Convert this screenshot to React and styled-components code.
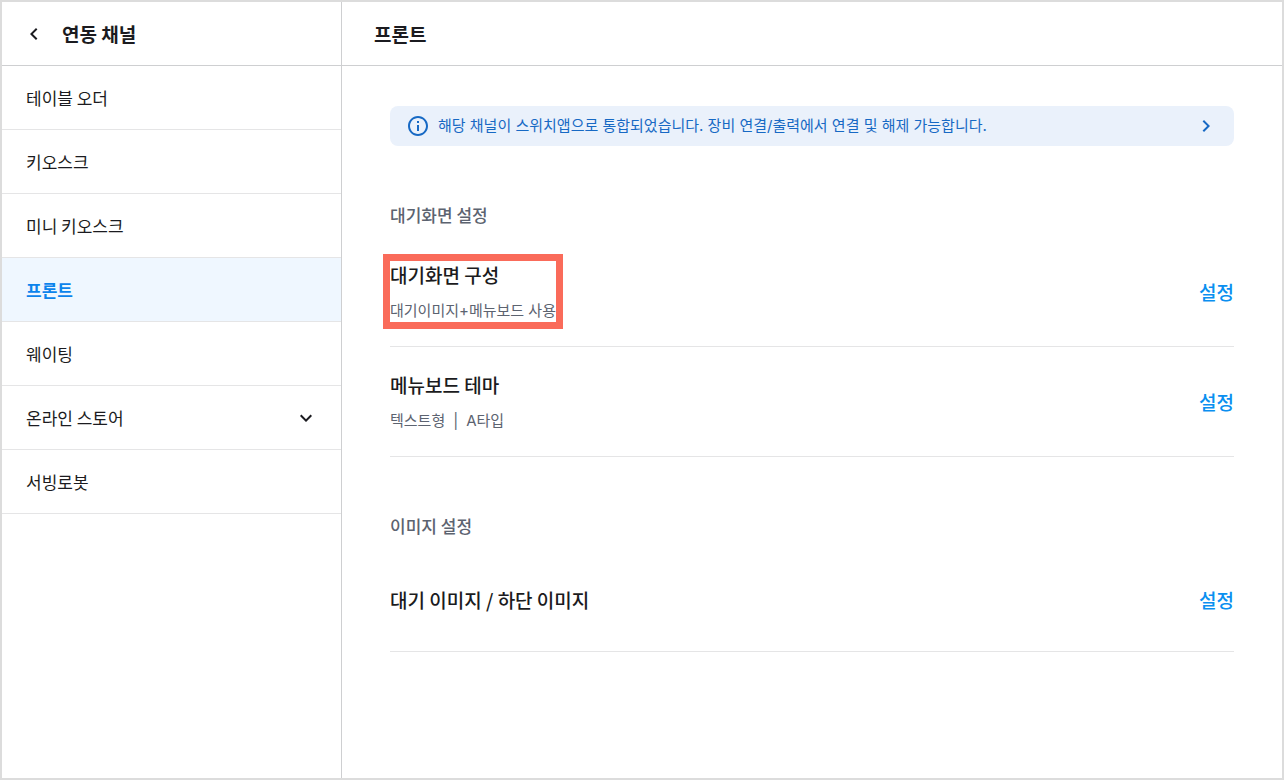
import React from 'react'
import styled, { createGlobalStyle, css, ThemeProvider } from 'styled-components'

const theme = {
  colors: {
    ink: '#1b1b20',
    slate: '#5c6370',
    primary: '#0c84ec',
    action: '#0a8ff0',
    notice: '#1769c4',
    noticeBg: '#eaf1fb',
    activeBg: '#eff7ff',
    frame: '#dcdcdc',
    border: '#cecfd1',
    divider: '#e5e5e6',
    coral: '#fa6b5a'
  },
  fonts: {
    body: "'Noto Sans CJK KR', 'Noto Sans', sans-serif",
    small: "Inter, 'Noto Sans CJK KR', sans-serif"
  }
}

const channels = [
  { text: '테이블 오더' },
  { text: '키오스크' },
  { text: '미니 키오스크' },
  { text: '프론트', active: true },
  { text: '웨이팅' },
  { text: '온라인 스토어', expandable: true },
  { text: '서빙로봇' }
]

const sections = [
  {
    title: '대기화면 설정',
    items: [
      { title: '대기화면 구성', detail: ['대기이미지+메뉴보드 사용'], highlighted: true },
      { title: '메뉴보드 테마', detail: ['텍스트형', 'A타입'] }
    ]
  },
  {
    title: '이미지 설정',
    items: [{ title: '대기 이미지 / 하단 이미지' }]
  }
]

const GlobalStyle = createGlobalStyle`
  *, *::before, *::after {
    box-sizing: border-box;
  }

  body {
    background-color: #ffffff;
    color: ${({ theme }) => theme.colors.ink};
    font-family: ${({ theme }) => theme.fonts.body};
    margin: 0;
  }
`

const Page = styled.div`
  border: 2px solid ${({ theme }) => theme.colors.frame};
  display: flex;
  min-height: 100vh;
`

const Sidebar = styled.aside`
  border-right: 1px solid ${({ theme }) => theme.colors.border};
  flex: none;
  width: 340px;
`

const Main = styled.main`
  flex: 1;
  min-width: 0;
`

const Header = styled.header`
  align-items: center;
  border-bottom: 1px solid ${({ theme }) => theme.colors.border};
  display: flex;
  gap: 16px;
  height: 64px;
  padding: 0 ${({ $pad }) => $pad};
`

const Heading = styled.h1`
  font-size: 19px;
  font-weight: 700;
  line-height: 27px;
  margin: 0;
`

const resetButton = css`
  background: none;
  border: none;
  color: inherit;
  cursor: pointer;
  font-family: inherit;
  padding: 0;
`

const BackButton = styled.button`
  ${resetButton}
  display: flex;
`

const Icon = styled.svg`
  display: block;
  fill: currentColor;
  flex: none;
  height: 24px;
  width: 24px;
`

const ChannelList = styled.ul`
  list-style: none;
  margin: 0;
  padding: 0;
`

const channelStyles = css`
  align-items: center;
  background-color: ${({ $active, theme }) => ($active ? theme.colors.activeBg : 'transparent')};
  border-bottom: 1px solid ${({ theme }) => theme.colors.divider};
  color: ${({ $active, theme }) => ($active ? theme.colors.primary : theme.colors.ink)};
  display: flex;
  font-size: 17px;
  font-weight: ${({ $active }) => ($active ? 700 : 400)};
  height: 64px;
  justify-content: space-between;
  line-height: 23px;
  padding: 0 23px 0 24px;
  text-decoration: none;
`

const ChannelLink = styled.a`
  ${channelStyles}
`

const ChannelToggle = styled.button`
  ${resetButton}
  width: 100%;
  ${channelStyles}
`

const Content = styled.div`
  padding: 40px 48px;
`

const Notice = styled.a`
  align-items: center;
  background-color: ${({ theme }) => theme.colors.noticeBg};
  border-radius: 8px;
  color: ${({ theme }) => theme.colors.notice};
  display: flex;
  font-family: ${({ theme }) => theme.fonts.small};
  font-size: 15px;
  gap: 8px;
  line-height: 24px;
  min-height: 40px;
  padding: 0 16px;
  text-decoration: none;
`

const NoticeText = styled.span`
  flex: 1;
`

const Section = styled.section`
  margin-top: 56px;
`

const SectionTitle = styled.h2`
  color: ${({ theme }) => theme.colors.slate};
  font-size: 17px;
  font-weight: 500;
  line-height: 26px;
  margin: 0;
  padding-bottom: 9px;
`

const Setting = styled.div`
  align-items: center;
  border-bottom: 1px solid ${({ theme }) => theme.colors.divider};
  display: flex;
  justify-content: space-between;
  min-height: 104px;
  padding: 24px 0;
`

const SettingText = styled.div`
  outline: ${({ $highlighted, theme }) =>
    $highlighted ? `7px solid ${theme.colors.coral}` : 'none'};
`

const SettingTitle = styled.h3`
  font-size: 19px;
  font-weight: 500;
  line-height: 28px;
  margin: 0;
`

const Detail = styled.p`
  color: ${({ theme }) => theme.colors.slate};
  display: flex;
  font-family: ${({ theme }) => theme.fonts.small};
  font-size: 15px;
  line-height: 23px;
  margin: 10px 0 0;
`

const DetailPart = styled.span`
  & + &::before {
    content: '|';
    margin: 0 8px;
  }
`

const SettingButton = styled.button`
  ${resetButton}
  color: ${({ theme }) => theme.colors.action};
  font-size: 19px;
  font-weight: 500;
  line-height: 27px;
`

const ChevronLeft = () => (
  <Icon viewBox="0 0 24 24" aria-hidden="true">
    <path d="M15.41 7.41 14 6l-6 6 6 6 1.41-1.41L10.83 12z" />
  </Icon>
)

const ChevronRight = () => (
  <Icon viewBox="0 0 24 24" aria-hidden="true">
    <path d="M10 6 8.59 7.41 13.17 12l-4.58 4.59L10 18l6-6z" />
  </Icon>
)

const ChevronDown = () => (
  <Icon viewBox="0 0 24 24" aria-hidden="true">
    <path d="M16.59 8.59 12 13.17 7.41 8.59 6 10l6 6 6-6z" />
  </Icon>
)

const InfoIcon = () => (
  <Icon viewBox="0 0 24 24" aria-hidden="true">
    <path d="M11 7h2v2h-2zm0 4h2v6h-2zm1-9C6.48 2 2 6.48 2 12s4.48 10 10 10 10-4.48 10-10S17.52 2 12 2m0 18c-4.41 0-8-3.59-8-8s3.59-8 8-8 8 3.59 8 8-3.59 8-8 8" />
  </Icon>
)

const Channel = ({ text, active, expandable }) => (
  <li>
    {expandable ? (
      <ChannelToggle type="button" aria-expanded="false">
        {text}
        <ChevronDown />
      </ChannelToggle>
    ) : (
      <ChannelLink href="#" $active={active} aria-current={active ? 'page' : undefined}>
        {text}
      </ChannelLink>
    )}
  </li>
)

const SettingRow = ({ title, detail, highlighted }) => (
  <Setting>
    <SettingText $highlighted={highlighted}>
      <SettingTitle>{title}</SettingTitle>
      {detail && (
        <Detail>
          {detail.map(part => (
            <DetailPart key={part}>{part}</DetailPart>
          ))}
        </Detail>
      )}
    </SettingText>
    <SettingButton type="button">설정</SettingButton>
  </Setting>
)

const App = () => (
  <ThemeProvider theme={theme}>
    <GlobalStyle />
    <Page>
      <Sidebar>
        <Header $pad="20px">
          <BackButton type="button">
            <ChevronLeft />
          </BackButton>
          <Heading as="h2">연동 채널</Heading>
        </Header>
        <nav>
          <ChannelList>
            {channels.map(channel => (
              <Channel key={channel.text} {...channel} />
            ))}
          </ChannelList>
        </nav>
      </Sidebar>
      <Main>
        <Header $pad="32px">
          <Heading>프론트</Heading>
        </Header>
        <Content>
          <Notice href="#">
            <InfoIcon />
            <NoticeText>
              해당 채널이 스위치앱으로 통합되었습니다. 장비 연결/출력에서 연결 및 해제 가능합니다.
            </NoticeText>
            <ChevronRight />
          </Notice>
          {sections.map(section => (
            <Section key={section.title}>
              <SectionTitle>{section.title}</SectionTitle>
              {section.items.map(item => (
                <SettingRow key={item.title} {...item} />
              ))}
            </Section>
          ))}
        </Content>
      </Main>
    </Page>
  </ThemeProvider>
)

export default App
